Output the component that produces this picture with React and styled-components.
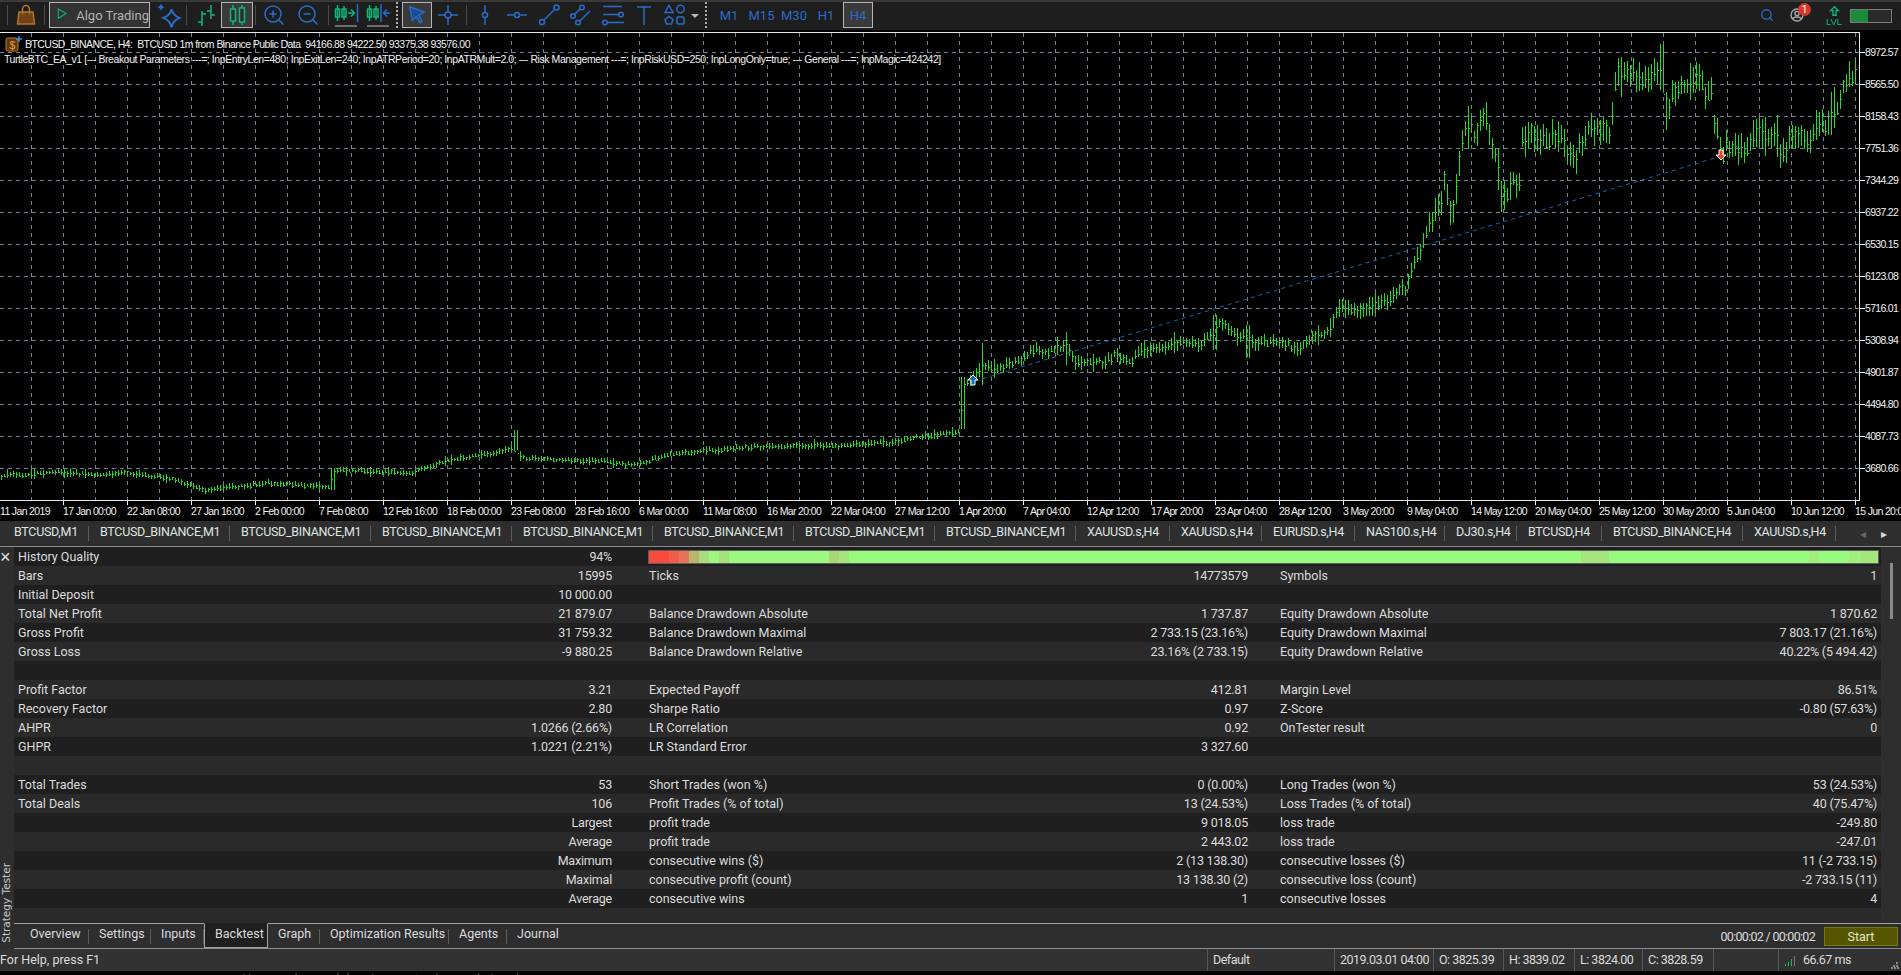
import React from "react"
import styled, { createGlobalStyle } from "styled-components"
import { Search, ZoomIn, ZoomOut } from "lucide-react"

const BLUE = "#2a6cc9"
const GREEN = "#0db67a"

const GlobalStyle = createGlobalStyle`
  html, body {
    margin: 0;
    padding: 0;
    background: #000;
    overflow: hidden;
  }
  * {
    box-sizing: border-box;
  }
`

/* ---------- chart data ---------- */

const fromZoom = (pts, ox, oy) => pts.map(([x, y]) => [ox + x / 3, oy + y / 3])

const CURVE = [
  [0, 476], [60, 472], [100, 475], [120, 472], [170, 478], [206, 490], [270, 483], [330, 487], [334, 470],
  [410, 473], [450, 460], [512, 449], [522, 458], [600, 461], [630, 465], [680, 453], [750, 447], [850, 445],
  ...fromZoom([
    [0, 425], [50, 410], [100, 405], [180, 395], [190, 262], [215, 235], [250, 195], [290, 210], [320, 195],
    [360, 180], [400, 150], [440, 160], [500, 130], [525, 190], [560, 185], [620, 185], [650, 160], [690, 190],
    [720, 150], [800, 140], [860, 125], [900, 140], [940, 100], [960, 70], [1000, 100], [1045, 110], [1060, 125],
    [1150, 125], [1190, 145], [1240, 110], [1290, 90], [1305, 30],
  ], 900, 300),
  [1370, 309], [1406, 288],
  ...fromZoom([
    [95, 570], [120, 520], [135, 450], [150, 540], [165, 520], [178, 400], [190, 330], [208, 270], [225, 320],
    [245, 270], [258, 260], [275, 340], [295, 400], [300, 480], [315, 510], [335, 450], [360, 470], [366, 340],
    [395, 300], [410, 340], [430, 330], [470, 320], [490, 330], [503, 390], [525, 390], [545, 340], [570, 290],
    [600, 295], [635, 310], [642, 180], [655, 130], [680, 130], [710, 130], [730, 150], [770, 130], [785, 120],
    [790, 200], [800, 230], [825, 180], [880, 150], [900, 130], [912, 190], [935, 180], [940, 290], [960, 320],
    [968, 380], [985, 340], [1000, 360], [1030, 350], [1037, 385], [1060, 310], [1080, 300], [1110, 330],
    [1130, 320], [1145, 370], [1155, 390], [1170, 320], [1200, 310], [1215, 345], [1245, 290], [1280, 280],
    [1300, 240], [1320, 230], [1335, 150], [1355, 140], [1375, 90],
  ], 1400, 30),
]

const TALL_BARS = [
  [516, 430, 450], [333, 468, 490], [963, 377, 429], [983, 343, 385], [1066, 332, 365], [1215, 315, 350],
  [1248, 325, 358], [1662, 44, 90], [1665, 92, 130], [1431, 212, 232],
]

const priceAt = x => {
  for (let i = 1; i < CURVE.length; i++) {
    if (x <= CURVE[i][0]) {
      const [x0, y0] = CURVE[i - 1]
      const [x1, y1] = CURVE[i]
      return y0 + ((y1 - y0) * (x - x0)) / (x1 - x0 || 1)
    }
  }
  return CURVE[CURVE.length - 1][1]
}

const spreadAt = x => {
  if (x < 790) return 2.4
  if (x < 960) return 2.6
  if (x < 1330) return 5
  if (x < 1430) return 7
  return 11
}

const buildBars = () => {
  let seed = 20190111
  const rnd = () => {
    seed = (seed * 1664525 + 1013904223) % 4294967296
    return seed / 4294967296
  }
  let d = ""
  for (let x = 1.5; x < 1858; x += 3) {
    const s = spreadAt(x)
    const mid = priceAt(x) + s * 0.8 * (rnd() - 0.5)
    let high = mid - s * (0.5 + rnd())
    let low = mid + s * (0.5 + rnd())
    const open = mid + s * (rnd() - 0.5)
    const close = mid + s * (rnd() - 0.5)
    if (rnd() > 0.93) {
      high -= s * 0.8
      low += s * 0.8
    }
    const tall = TALL_BARS.find(b => Math.abs(b[0] - x) <= 1.5)
    if (tall) {
      high = tall[1]
      low = tall[2]
    }
    d += `M${x} ${Math.round(high)}V${Math.round(low)}M${x} ${Math.round(close)}H${x + 1}`
    if (rnd() > 0.5) d += `M${x - 1} ${Math.round(open)}H${x}`
  }
  return d
}

const BARS_PATH = buildBars()

const PRICES = [
  "8972.57", "8565.50", "8158.43", "7751.36", "7344.29", "6937.22", "6530.15",
  "6123.08", "5716.01", "5308.94", "4901.87", "4494.80", "4087.73", "3680.66",
]

const TIMES = [
  "11 Jan 2019", "17 Jan 00:00", "22 Jan 08:00", "27 Jan 16:00", "2 Feb 00:00", "7 Feb 08:00", "12 Feb 16:00",
  "18 Feb 00:00", "23 Feb 08:00", "28 Feb 16:00", "6 Mar 00:00", "11 Mar 08:00", "16 Mar 20:00", "22 Mar 04:00",
  "27 Mar 12:00", "1 Apr 20:00", "7 Apr 04:00", "12 Apr 12:00", "17 Apr 20:00", "23 Apr 04:00", "28 Apr 12:00",
  "3 May 20:00", "9 May 04:00", "14 May 12:00", "20 May 04:00", "25 May 12:00", "30 May 20:00", "5 Jun 04:00",
  "10 Jun 12:00", "15 Jun 20:00",
]

const CHART_TABS = [
  ["BTCUSD,M1", 89, 14],
  ...Array.from({ length: 7 }, () => ["BTCUSD_BINANCE,M1", 141]),
  ["XAUUSD.s,H4", 94], ["XAUUSD.s,H4", 92], ["EURUSD.s,H4", 93], ["NAS100.s,H4", 90], ["DJ30.s,H4", 72],
  ["BTCUSD,H4", 85], ["BTCUSD_BINANCE,H4", 141], ["XAUUSD.s,H4", 93],
]

const QUALITY = [
  ["#f94b3d", 20], ["#ef5c48", 10], ["#e8715a", 10], ["#bdb56a", 10], ["#a9dc7d", 10], ["#9ef67f", 10], ["#a5e07e", 10],
  ["#9bf97f", 100], ["#a8d679", 10], ["#a6e57e", 10], ["#98fb7e", 732], ["#a5e57e", 28], ["#98fb7e", 200],
  ["#a0ee7c", 10], ["#98fb7e", 30], ["#a0ee7c", 10], ["#98fb7e", 1], ["#a3e67c", 61],
]

const STATS = [
  null,
  ["Bars", "15995", "Ticks", "14773579", "Symbols", "1"],
  ["Initial Deposit", "10 000.00"],
  ["Total Net Profit", "21 879.07", "Balance Drawdown Absolute", "1 737.87", "Equity Drawdown Absolute", "1 870.62"],
  ["Gross Profit", "31 759.32", "Balance Drawdown Maximal", "2 733.15 (23.16%)", "Equity Drawdown Maximal", "7 803.17 (21.16%)"],
  ["Gross Loss", "-9 880.25", "Balance Drawdown Relative", "23.16% (2 733.15)", "Equity Drawdown Relative", "40.22% (5 494.42)"],
  [],
  ["Profit Factor", "3.21", "Expected Payoff", "412.81", "Margin Level", "86.51%"],
  ["Recovery Factor", "2.80", "Sharpe Ratio", "0.97", "Z-Score", "-0.80 (57.63%)"],
  ["AHPR", "1.0266 (2.66%)", "LR Correlation", "0.92", "OnTester result", "0"],
  ["GHPR", "1.0221 (2.21%)", "LR Standard Error", "3 327.60"],
  [],
  ["Total Trades", "53", "Short Trades (won %)", "0 (0.00%)", "Long Trades (won %)", "53 (24.53%)"],
  ["Total Deals", "106", "Profit Trades (% of total)", "13 (24.53%)", "Loss Trades (% of total)", "40 (75.47%)"],
  ["", "Largest", "profit trade", "9 018.05", "loss trade", "-249.80"],
  ["", "Average", "profit trade", "2 443.02", "loss trade", "-247.01"],
  ["", "Maximum", "consecutive wins ($)", "2 (13 138.30)", "consecutive losses ($)", "11 (-2 733.15)"],
  ["", "Maximal", "consecutive profit (count)", "13 138.30 (2)", "consecutive loss (count)", "-2 733.15 (11)"],
  ["", "Average", "consecutive wins", "1", "consecutive losses", "4"],
  [],
]

const TESTER_TABS = [
  ["Overview", 75, 16], ["Settings", 62], ["Inputs", 53], ["Backtest", 64, 10, true], ["Graph", 52],
  ["Optimization Results", 129], ["Agents", 58], ["Journal", 60, 10, false, true],
]

/* ---------- icons ---------- */

const Ico = ({ size = 24, children, ...rest }) => (
  <svg width={size} height={size} viewBox="0 0 24 24" fill="none" stroke={BLUE} strokeWidth="1.5" {...rest}>
    {children}
  </svg>
)

const BagIcon = () => (
  <Ico stroke="#b5732c" fill="#6d4218">
    <path d="M5 9h14l1.5 12h-17z" />
    <path d="M8.5 11V6a3.5 3.5 0 0 1 7 0v5" fill="none" />
  </Ico>
)

const PlayIcon = () => (
  <Ico stroke={GREEN} size={20}>
    <path d="M6 3.5v13l11-6.5z" />
  </Ico>
)

const SparkIcon = () => (
  <Ico size={28} strokeWidth="1.7">
    <path d="M15 7c1 4 3 6 7 7.5-4 1.5-6 3.5-7 8-1-4.500-3-6.500-7-8 4-1.500 6-3.500 7-7.500z" />
    <path d="M6 2c.5 2 1.200 2.700 3 3.300C7.200 5.900 6.500 6.600 6 8.500 5.500 6.600 4.800 5.900 3 5.300 4.800 4.700 5.500 4 6 2z" fill={BLUE} stroke="none" />
  </Ico>
)

const BarsIcon = () => (
  <Ico stroke={GREEN}>
    <path d="M9 8v15M5 19h4M9 11h4M18 2v14M14 8h4M18 12h4" />
  </Ico>
)

const CandlesIcon = () => (
  <Ico stroke={GREEN}>
    <path d="M8 2v20M17 2v20" />
    <rect x="5.500" y="6" width="5" height="12" fill="#2e2e2e" />
    <rect x="14.500" y="5" width="5" height="14" fill="#2e2e2e" />
  </Ico>
)

const MiniCandles = () => (
  <g stroke={GREEN} fill="none">
    <path d="M3.500 2v16M10 3v14" />
    <rect x="1.500" y="6" width="4" height="8" />
    <rect x="8" y="6" width="4" height="8" />
  </g>
)

const ShiftIcon = () => (
  <Ico size={26} viewBox="0 0 26 26">
    <g transform="translate(0 1)"><MiniCandles /></g>
    <path d="M14 11h6M17 7.500l3.500 3.500-3.500 3.500" stroke={GREEN} />
    <path d="M23.500 2v18" />
    <path d="M1 24h22" stroke="#888" />
  </Ico>
)

const ScrollIcon = () => (
  <Ico size={26} viewBox="0 0 26 26">
    <g transform="translate(0 1)"><MiniCandles /></g>
    <path d="M15 2v18M24 11h-6M21 7.500L17.500 11l3.500 3.500" />
    <path d="M1 24h22" stroke="#888" />
  </Ico>
)

const CursorIcon = () => (
  <Ico size={22}>
    <path d="M4 3l16 6-6 3 3.500 7-2.500 1.500-3.500-7L7 18z" fill="#184c96" strokeLinejoin="round" />
  </Ico>
)

const CrossIcon = () => (
  <Ico>
    <path d="M12 2v20M2 12h20" />
    <circle cx="12" cy="12" r="3" fill="#1e1e1e" />
  </Ico>
)

const VLineIcon = () => (
  <Ico>
    <path d="M12 2v20" />
    <circle cx="12" cy="12" r="2.500" fill="#1e1e1e" />
  </Ico>
)

const HLineIcon = () => (
  <Ico>
    <path d="M2 12h20" />
    <circle cx="12" cy="12" r="2.500" fill="#1e1e1e" />
  </Ico>
)

const TrendIcon = () => (
  <Ico>
    <path d="M6.500 17.500L18 6" />
    <circle cx="5" cy="19" r="2.500" />
    <circle cx="19.500" cy="4.500" r="2.500" />
  </Ico>
)

const ParallelIcon = () => (
  <Ico>
    <path d="M3 14L12 5M10 19l11-11" />
    <circle cx="4" cy="13" r="2.300" fill="#1e1e1e" />
    <circle cx="13" cy="4.500" r="2.300" fill="#1e1e1e" />
    <circle cx="9" cy="19.500" r="2.300" fill="#1e1e1e" />
  </Ico>
)

const LevelsIcon = () => (
  <Ico>
    <path d="M2 3.500h19M2 11.500h16M7 19.500h16" />
    <circle cx="20" cy="11.500" r="2.300" />
    <circle cx="4" cy="19.500" r="2.300" />
  </Ico>
)

const TextToolIcon = () => (
  <Ico>
    <path d="M4 4h14M11 4v18" />
  </Ico>
)

const ShapesIcon = () => (
  <Ico>
    <path d="M6 2.500l4 7H2z" />
    <circle cx="17.500" cy="6" r="3.700" />
    <path d="M6 13.500l4 3-1.500 4.500h-5L2 16.500z" />
    <rect x="14" y="14" width="7" height="7" rx="1" />
  </Ico>
)

const CoinIcon = () => (
  <svg width="17" height="16" viewBox="0 0 17 16">
    <rect x="1" y="2" width="12" height="13" rx="2" fill="#5c3510" stroke="#c27a2c" />
    <text x="7" y="12.500" fontSize="11" fill="#e6a050" textAnchor="middle" fontFamily="Liberation Sans, sans-serif">$</text>
    <path d="M14 0v6M11 3h6" stroke="#3c8be0" strokeWidth="1.500" />
  </svg>
)

const UserIcon = () => (
  <svg width="14" height="14" viewBox="0 0 20 20" fill="none" stroke="#a8a8a8" strokeWidth="2">
    <circle cx="10" cy="10" r="8.500" />
    <circle cx="10" cy="8" r="3" />
    <path d="M4 15c2-3 10-3 12 0" />
  </svg>
)

const LevelArrow = () => (
  <svg width="11" height="10" viewBox="0 0 14 13" fill="none" stroke={GREEN} strokeWidth="1.800">
    <path d="M7 1L2 6h3v6h4V6h3z" />
  </svg>
)

const SignalIcon = () => (
  <svg width="13" height="11" viewBox="0 0 13 11">
    <path d="M1 9h1v2H1zM4 7h1v4H4zM7 4h1v7H7z" fill="#19c24a" />
    <path d="M10 1h1v10h-1z" fill="#777" />
  </svg>
)

const GripIcon = () => (
  <svg width="8" height="8" viewBox="0 0 8 8" fill="#8a8a8a">
    <path d="M5 1h2v2H5zM2 4h2v2H2zM5 4h2v2H5zM0 6h2v2H0zM3 6h2v2H3zM6 6h2v2H6z" />
  </svg>
)

/* ---------- page ---------- */

const App = () => (
  <Page>
    <GlobalStyle />
    <Toolbar>
      <Sep />
      <ToolBtn><BagIcon /></ToolBtn>
      <Sep />
      <AlgoButton><PlayIcon />Algo Trading</AlgoButton>
      <ToolBtn><SparkIcon /></ToolBtn>
      <Sep />
      <ToolBtn><BarsIcon /></ToolBtn>
      <ToolBtn $active><CandlesIcon /></ToolBtn>
      <Sep />
      <ToolBtn><ZoomIn size={24} color={BLUE} strokeWidth={1.5} /></ToolBtn>
      <ToolBtn $w={36}><ZoomOut size={24} color={BLUE} strokeWidth={1.5} /></ToolBtn>
      <Sep />
      <ToolBtn><ShiftIcon /></ToolBtn>
      <ToolBtn><ScrollIcon /></ToolBtn>
      <DotSep />
      <ToolBtn $active $w={30} $ml={4}><CursorIcon /></ToolBtn>
      <ToolBtn><CrossIcon /></ToolBtn>
      <Sep />
      <ToolBtn><VLineIcon /></ToolBtn>
      <ToolBtn><HLineIcon /></ToolBtn>
      <ToolBtn><TrendIcon /></ToolBtn>
      <ToolBtn><ParallelIcon /></ToolBtn>
      <ToolBtn><LevelsIcon /></ToolBtn>
      <ToolBtn><TextToolIcon /></ToolBtn>
      <ToolBtn $w={28}><ShapesIcon /></ToolBtn>
      <DropArrow />
      <DotSep $ml={4} />
      <Period $w={32} $ml={6}>M1</Period>
      <Period $w={33}>M15</Period>
      <Period $w={32}>M30</Period>
      <Period $w={32}>H1</Period>
      <Period $w={30} $ml={1} $active>H4</Period>
      <ToolRight>
        <ToolBtn $w={28}><Search size={14} color={BLUE} strokeWidth={2.2} /></ToolBtn>
        <UserSlot>
          <UserIcon />
          <Badge>1</Badge>
        </UserSlot>
        <LevelBox>
          <LevelArrow />
          <LevelText>LVL</LevelText>
        </LevelBox>
        <Meter><MeterFill /></Meter>
      </ToolRight>
    </Toolbar>

    <ChartPane>
      <Canvas>
        <svg width="1859" height="467" viewBox="0 33 1859 467">
          <g stroke="#6f8296" strokeDasharray="4 4" shapeRendering="crispEdges">
            {Array.from({ length: 58 }, (_, i) => (
              <line key={i} x1={31.5 + 32 * i} x2={31.5 + 32 * i} y1="33" y2="500" />
            ))}
            {Array.from({ length: 14 }, (_, i) => (
              <line key={i} x1="0" x2="1859" y1={52.5 + 32 * i} y2={52.5 + 32 * i} />
            ))}
          </g>
          <path d={BARS_PATH} stroke="#22dd22" fill="none" shapeRendering="crispEdges" />
          <line x1="975" y1="381" x2="1718" y2="157" stroke="#1668b0" strokeDasharray="4 4" />
          <path d="M973 375l5 5h-3v5h-4v-5h-3z" fill="#1668b0" stroke="#fff" />
          <path d="M1721 160l-5-5h3v-5h4v5h3z" fill="#e8442a" stroke="#fff" />
        </svg>
        <Legend>
          <LegendTitle>
            <CoinIcon />
            <span>{"BTCUSD_BINANCE, H4:  BTCUSD 1m from Binance Public Data  94166.88 94222.50 93375.38 93576.00"}</span>
          </LegendTitle>
          <div>
            {"TurtleBTC_EA_v1 [--- Breakout Parameters ---=; InpEntryLen=480; InpExitLen=240; InpATRPeriod=20; InpATRMult=2.0; --- Risk Management ---=; InpRiskUSD=250; InpLongOnly=true; --- General ---=; InpMagic=424242]"}
          </div>
        </Legend>
      </Canvas>
      <PriceAxis>
        {PRICES.map(p => <PriceLabel key={p}>{p}</PriceLabel>)}
      </PriceAxis>
    </ChartPane>

    <TimeAxis>
      {TIMES.map((t, i) => <TimeLabel key={t} $first={i === 0}>{t}</TimeLabel>)}
    </TimeAxis>

    <ChartTabs>
      {CHART_TABS.map(([label, w, pad], i) => (
        <ChartTab key={i} $w={w} $pad={pad}>{label}</ChartTab>
      ))}
      <TabArrows>
        <TabArrow $dim>◂</TabArrow>
        <TabArrow>▸</TabArrow>
      </TabArrows>
    </ChartTabs>

    <TesterPanel>
      <Rail>
        <CloseMark>×</CloseMark>
        <RailTitle>Strategy Tester</RailTitle>
      </Rail>
      <TesterBody>
        <StatsArea>
          <StatsList>
            {STATS.map((row, i) => (
              <StatRow key={i}>
                {row === null ? (
                  <>
                    <Pair><span>History Quality</span><StatValue>94%</StatValue></Pair>
                    <QualityBar>
                      {QUALITY.map(([c, w], j) => <QualitySeg key={j} $c={c} $w={w} />)}
                    </QualityBar>
                  </>
                ) : (
                  [0, 2, 4].map(k => (
                    <Pair key={k}><span>{row[k]}</span><StatValue>{row[k + 1]}</StatValue></Pair>
                  ))
                )}
              </StatRow>
            ))}
          </StatsList>
          <ScrollTrack><ScrollThumb /></ScrollTrack>
        </StatsArea>
        <TesterTabs>
          {TESTER_TABS.map(([label, w, pad, active, last]) => (
            <TesterTab key={label} $w={w} $pad={pad} $active={active} $last={last}>{label}</TesterTab>
          ))}
          <TesterRight>
            <Timer>00:00:02 / 00:00:02</Timer>
            <StartButton>Start</StartButton>
          </TesterRight>
        </TesterTabs>
      </TesterBody>
    </TesterPanel>

    <StatusBar>
      <StatusHelp>For Help, press F1</StatusHelp>
      <StatusCell $w={127}>Default</StatusCell>
      <StatusCell $w={99}>2019.03.01 04:00</StatusCell>
      <StatusCell $w={70}>O: 3825.39</StatusCell>
      <StatusCell $w={71}>H: 3839.02</StatusCell>
      <StatusCell $w={68}>L: 3824.00</StatusCell>
      <StatusCell $w={71}>C: 3828.59</StatusCell>
      <StatusCell $w={65} />
      <StatusCell $w={123}>
        <SignalIcon />
        <PingText>66.67 ms</PingText>
        <Grip><GripIcon /></Grip>
      </StatusCell>
    </StatusBar>
    <BehindStrip>You can drag and drop images to change their order</BehindStrip>
  </Page>
)

export default App

const Page = styled.div`
  width: 1901px;
  height: 975px;
  overflow: hidden;
  background: #000;
  display: flex;
  flex-direction: column;
  font-family: Roboto, "Liberation Sans", sans-serif;
  font-size: 12.5px;
  color: #dcdcdc;
`

const Toolbar = styled.div`
  height: 32px;
  flex: none;
  display: flex;
  align-items: flex-start;
  padding: 0 9px 0 5px;
  background: linear-gradient(#1e1e1e 0 28px, #000 28px);
  border-top: 2px solid #3a3a3a;
`

const Sep = styled.div`
  width: 1px;
  height: 20px;
  margin: 3px 2px 0;
  background: #4a4a4a;
  flex: none;
`

const DotSep = styled.div`
  width: 2px;
  height: 28px;
  margin-left: ${props => props.$ml || 1}px;
  flex: none;
  background: repeating-linear-gradient(#b0b0b0 0 2px, transparent 2px 4px);
`

const ToolBtn = styled.div`
  width: ${props => props.$w || 32}px;
  height: 26px;
  margin-left: ${props => props.$ml || 0}px;
  flex: none;
  display: flex;
  align-items: center;
  justify-content: center;
  background: ${props => (props.$active ? "#3a3a3a" : "transparent")};
  border: 1px solid ${props => (props.$active ? "#b4b4b4" : "transparent")};
`

const AlgoButton = styled.div`
  width: 101px;
  height: 26px;
  margin: 0 2px;
  flex: none;
  display: flex;
  align-items: center;
  gap: 5px;
  padding-left: 4px;
  background: #333;
  border: 1px solid #b4b4b4;
  color: #aeb4b4;
  font-size: 13px;
  white-space: nowrap;
`

const DropArrow = styled.div`
  width: 0;
  height: 0;
  margin: 12px 2px 0;
  flex: none;
  border-left: 4px solid transparent;
  border-right: 4px solid transparent;
  border-top: 4px solid #b8b8b8;
`

const Period = styled(ToolBtn)`
  color: #2a6cc9;
  font-size: 13px;
`

const ToolRight = styled.div`
  margin-left: auto;
  display: flex;
  align-items: flex-start;
`

const UserSlot = styled.div`
  position: relative;
  width: 32px;
  height: 26px;
  margin-right: 5px;
  display: flex;
  align-items: center;
  justify-content: center;
`

const Badge = styled.div`
  position: absolute;
  top: 1px;
  left: 17px;
  width: 13px;
  height: 13px;
  border-radius: 50%;
  background: #d8382c;
  color: #f4f4f4;
  font-size: 11px;
  line-height: 13px;
  text-align: center;
`

const LevelBox = styled.div`
  width: 32px;
  height: 26px;
  display: flex;
  flex-direction: column;
  align-items: center;
  padding-top: 4px;
  svg {
    flex: none;
  }
`

const LevelText = styled.div`
  font: 9.5px/11px "Liberation Sans", sans-serif;
  color: ${GREEN};
`

const Meter = styled.div`
  width: 42px;
  height: 14px;
  margin-top: 7px;
  border: 1px solid #7a7a7a;
  background: #2a2a2a;
`

const MeterFill = styled.div`
  width: 17px;
  height: 100%;
  background: #1a8a3c;
`

const ChartPane = styled.div`
  height: 469px;
  flex: none;
  display: flex;
`

const Canvas = styled.div`
  position: relative;
  width: 1860px;
  height: 469px;
  flex: none;
  border-top: 1px solid #e8e8e8;
  border-right: 1px solid #e8e8e8;
  border-bottom: 1px solid #e8e8e8;
  svg {
    display: block;
  }
`

const Legend = styled.div`
  position: absolute;
  top: 3px;
  left: 4px;
  font: 10.5px/15px "Liberation Sans", sans-serif;
  letter-spacing: -0.43px;
  color: #f0f0f0;
  white-space: pre;
`

const LegendTitle = styled.div`
  display: flex;
  align-items: center;
  gap: 3px;
  margin-left: 1px;
  letter-spacing: -0.55px;
  svg {
    flex: none;
  }
`

const PriceAxis = styled.div`
  flex: 1;
  padding-top: 4px;
  overflow: hidden;
`

const PriceLabel = styled.div`
  height: 32px;
  padding-left: 5px;
  font: 10.5px/32px "Liberation Sans", sans-serif;
  letter-spacing: -0.7px;
  color: #f0f0f0;
  background: linear-gradient(#fff, #fff) left center / 5px 1px no-repeat;
`

const TimeAxis = styled.div`
  height: 20px;
  flex: none;
  display: flex;
  overflow: hidden;
`

const TimeLabel = styled.div`
  width: ${props => (props.$first ? 63 : 64)}px;
  flex: none;
  padding-top: 3px;
  font: 10.5px/14px "Liberation Sans", sans-serif;
  letter-spacing: -0.65px;
  color: #f0f0f0;
  white-space: nowrap;
  background: ${props => (props.$first ? "none" : "linear-gradient(#fff, #fff) left top / 1px 4px no-repeat")};
`

const ChartTabs = styled.div`
  height: 26px;
  flex: none;
  display: flex;
  align-items: center;
  background: #2e2e2e;
  border-bottom: 1px solid #8a8a8a;
`

const ChartTab = styled.div`
  width: ${props => props.$w}px;
  height: 25px;
  flex: none;
  padding-left: ${props => props.$pad || 11}px;
  line-height: 21px;
  letter-spacing: -0.3px;
  color: #dfe4e4;
  white-space: nowrap;
  background: linear-gradient(#5c5c5c, #5c5c5c) right center / 1px 15px no-repeat;
`

const TabArrows = styled.div`
  margin-left: auto;
  width: 65px;
  display: flex;
  justify-content: space-between;
  padding: 0 14px 0 24px;
`

const TabArrow = styled.span`
  font-size: 12px;
  color: ${props => (props.$dim ? "#666" : "#d8d8d8")};
`

const TesterPanel = styled.div`
  height: 402px;
  flex: none;
  display: flex;
  background: #2e2e2e;
`

const Rail = styled.div`
  width: 14px;
  flex: none;
  display: flex;
  flex-direction: column;
  justify-content: space-between;
  align-items: flex-start;
`

const CloseMark = styled.div`
  width: 10px;
  font: 18px/20px "Liberation Sans", sans-serif;
  text-align: center;
  color: #e8e8e8;
`

const RailTitle = styled.div`
  writing-mode: vertical-rl;
  transform: rotate(180deg);
  font: 10.5px/12px "DejaVu Sans", sans-serif;
  margin-bottom: 6px;
  color: #c8c8c8;
  white-space: nowrap;
`

const TesterBody = styled.div`
  flex: 1;
  min-width: 0;
  display: flex;
  flex-direction: column;
`

const StatsArea = styled.div`
  height: 376px;
  flex: none;
  display: flex;
  overflow: hidden;
`

const StatsList = styled.div`
  width: 1867px;
  flex: none;
`

const StatRow = styled.div`
  height: 19px;
  display: flex;
  align-items: center;
  padding-left: 4px;
  line-height: 19px;
  background: #2a2a2a;
  &:nth-child(odd) {
    background: #1f1f1f;
  }
`

const Pair = styled.div`
  width: 594px;
  flex: none;
  display: flex;
  justify-content: space-between;
  white-space: nowrap;
  &:nth-child(2) {
    width: 599px;
    margin-left: 37px;
  }
  &:nth-child(3) {
    width: 597px;
    margin-left: 32px;
  }
`

const StatValue = styled.span`
  letter-spacing: -0.2px;
`

const QualityBar = styled.div`
  width: 1231px;
  height: 14px;
  margin-left: 36px;
  flex: none;
  display: flex;
  overflow: hidden;
  border: 1px solid #5e5e5e;
`

const QualitySeg = styled.div`
  width: ${props => props.$w}px;
  flex: none;
  background: ${props => props.$c};
`

const ScrollTrack = styled.div`
  flex: 1;
  padding: 16px 0 0 9px;
`

const ScrollThumb = styled.div`
  width: 3px;
  height: 56px;
  background: #8a8a8a;
`

const TesterTabs = styled.div`
  height: 26px;
  flex: none;
  display: flex;
  border-top: 1px solid #a0a0a0;
  border-bottom: 1px solid #8a8a8a;
`

const tabBackground = props => {
  if (props.$active) return "#1f1f1f"
  if (props.$last) return "none"
  return "linear-gradient(#5c5c5c, #5c5c5c) right center / 1px 15px no-repeat"
}

const TesterTab = styled.div`
  width: ${props => props.$w}px;
  margin-top: ${props => (props.$active ? -1 : 0)}px;
  flex: none;
  padding-left: ${props => props.$pad || 10}px;
  line-height: 19px;
  white-space: nowrap;
  background: ${tabBackground};
  border: ${props => (props.$active ? "1px solid #a0a0a0" : "none")};
  border-top-color: ${props => (props.$active ? "#1f1f1f" : "transparent")};
`

const TesterRight = styled.div`
  margin-left: auto;
  display: flex;
  align-items: center;
  gap: 9px;
  padding-right: 3px;
`

const Timer = styled.div`
  letter-spacing: -0.7px;
  white-space: nowrap;
`

const StartButton = styled.div`
  width: 74px;
  height: 19px;
  border: 1px solid #78780a;
  background: #565600;
  line-height: 17px;
  text-align: center;
  color: #e8e8d0;
`

const StatusBar = styled.div`
  height: 22px;
  flex: none;
  display: flex;
  align-items: stretch;
  background: #323232;
  line-height: 22px;
`

const StatusHelp = styled.div`
  flex: 1;
  white-space: nowrap;
`

const StatusCell = styled.div`
  width: ${props => props.$w}px;
  flex: none;
  display: flex;
  align-items: center;
  padding-left: 5px;
  border-left: 1px solid #585858;
  letter-spacing: -0.5px;
  white-space: nowrap;
`

const PingText = styled.span`
  margin-left: 6px;
`

const Grip = styled.div`
  margin-left: auto;
  margin-right: 2px;
  align-self: flex-end;
  line-height: 0;
  padding-bottom: 2px;
`

const BehindStrip = styled.div`
  height: 4px;
  overflow: hidden;
  padding-left: 243px;
  font-size: 12.5px;
  line-height: 15px;
  color: #555;
  white-space: nowrap;
`
